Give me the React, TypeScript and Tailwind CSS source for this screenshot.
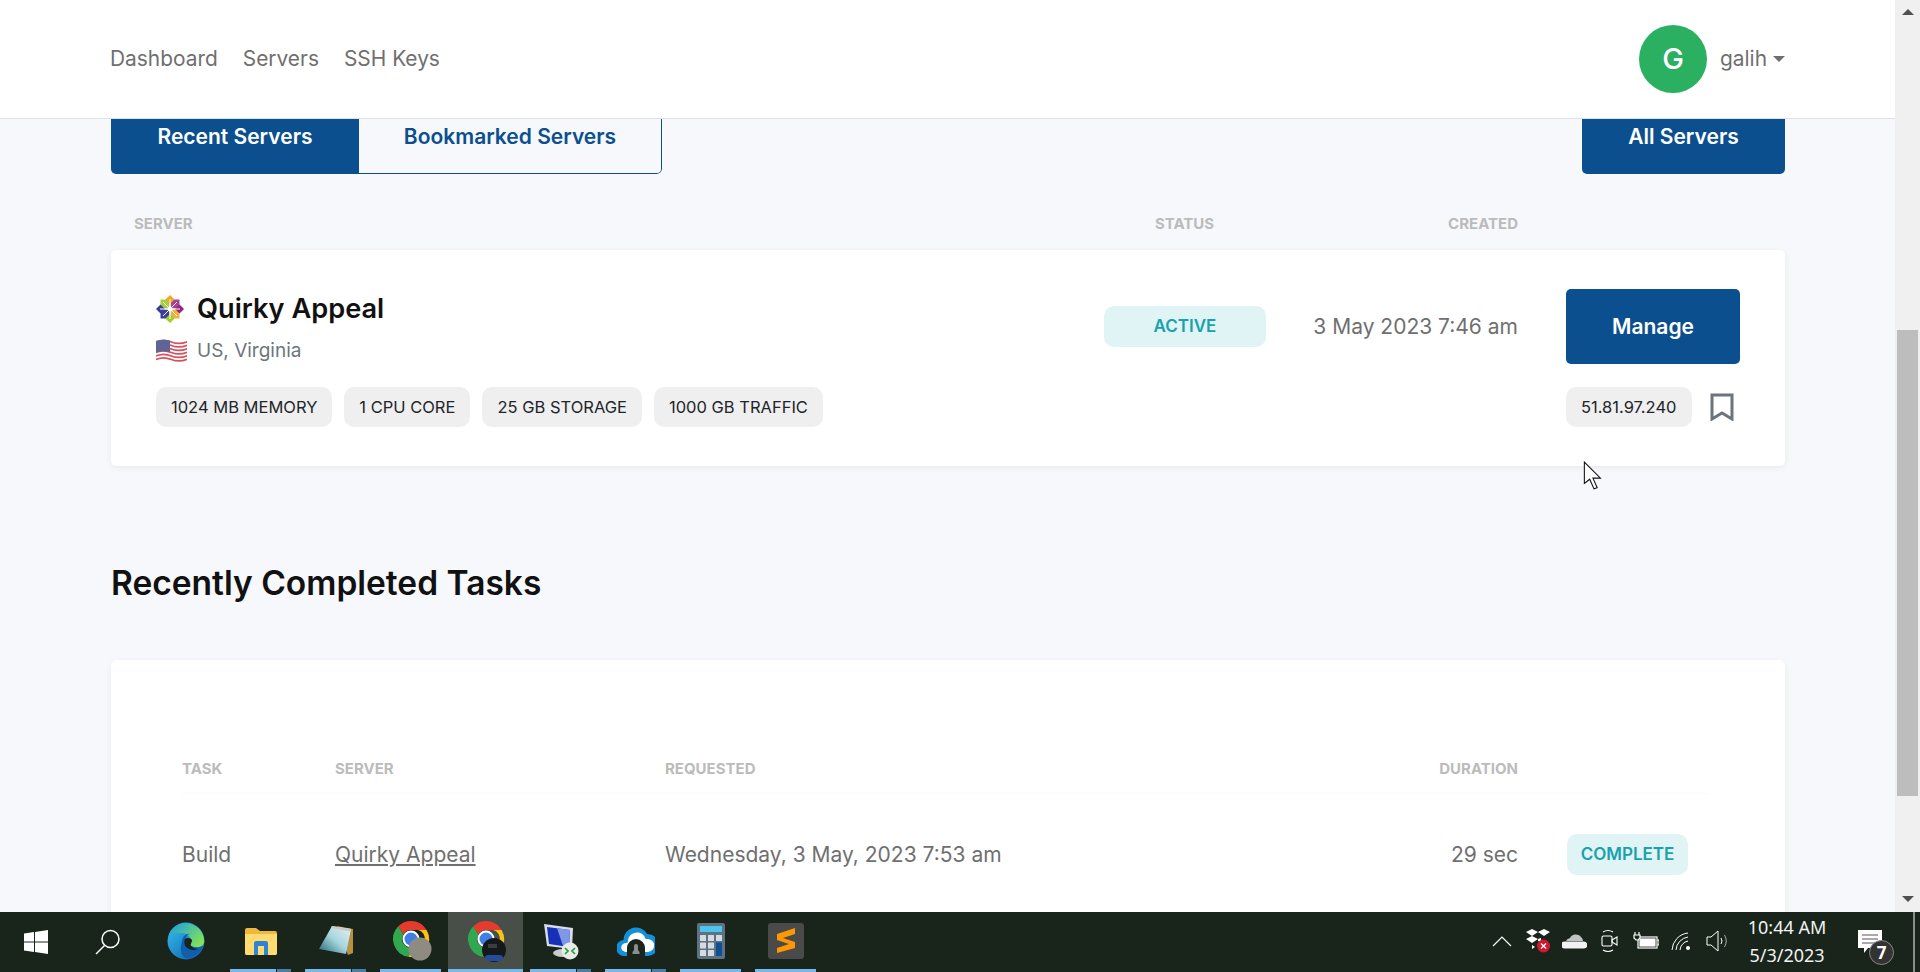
import React from 'react';

const Chip: React.FC<{ children: React.ReactNode }> = ({ children }) => (
  <span className="h-10 px-[15px] flex items-center rounded-[10px] bg-[#efefef] text-[16.5px] text-[#212529] whitespace-nowrap">
    {children}
  </span>
);

const CentosLogo = () => (
  <svg width="30" height="30" viewBox="0 0 30 30">
    <path d="M5.500 5.500h9v9h-9z" fill="#a3d13a" />
    <path d="M15.500 5.500h9v9h-9z" fill="#a83f96" />
    <path d="M15.500 15.500h9v9h-9z" fill="#f2b03c" />
    <path d="M5.500 15.500h9v9h-9z" fill="#3c3c9c" />
    <path d="M15 1l4.500 4.500L15 10l-4.500-4.500z" fill="#efa724" />
    <path d="M29 15l-4.500 4.500L20 15l4.500-4.500z" fill="#932279" />
    <path d="M15 29l-4.500-4.500L15 20l4.500 4.500z" fill="#9ccd2a" />
    <path d="M1 15l4.500-4.500L10 15l-4.500 4.500z" fill="#3c3c9c" />
    <path d="M15 5v20M5 15h20M8 8l14 14M22 8L8 22" stroke="#fff" strokeWidth="1" />
    <circle cx="15" cy="15" r="2.500" fill="#fff" />
  </svg>
);

const UsFlag = () => (
  <svg width="31" height="24" viewBox="0 0 31 24">
    <path d="M0 2q8-3 15 0t16 0v20q-8 3-16 0t-15 0z" fill="#fff" />
    {[0, 3.500, 7, 10.500, 14, 17.500].map((y) => (
      <path key={y} transform={`translate(0 ${y})`} d="M0 2q8-3 15 0t16 0v1.800q-8 3-16 0t-15 0z" fill="#d4525f" />
    ))}
    <path d="M0 2q7-2.500 14-.4v11.400q-7-1.600-14 .4z" fill="#5f6497" />
  </svg>
);

const Edge = () => (
  <svg width="38" height="38" viewBox="0 0 38 38">
    <defs>
      <linearGradient id="eg1" x1="0" y1="0" x2="1" y2="1">
        <stop offset="0" stopColor="#35c1f1" />
        <stop offset="1" stopColor="#0c59a4" />
      </linearGradient>
      <linearGradient id="eg2" x1="0" y1="0" x2="1" y2="0.6">
        <stop offset="0" stopColor="#1b9de2" />
        <stop offset="1" stopColor="#7fe05c" />
      </linearGradient>
    </defs>
    <circle cx="19" cy="19" r="18.500" fill="url(#eg1)" />
    <path d="M3 11C8 2 21-2 30 5c5 4 8 10 7 16-1 4-6 5-11 4-4-1-5-3-3-6 1-4-2-8-8-8-5 0-9 1-12 0z" fill="url(#eg2)" />
    <path d="M15 20c0-5 4-9 8-8-5 0-5 7 0 11 4 3 9 3 13 1-3 8-11 13-18 12-5-4-5-10-3-16z" fill="#0f5fae" />
    <path d="M18 17c3-2 6-1 7 1 0 3-2 4-1 6 1 2 4 3 7 3-4 2-9 1-12-2-2-2-2-6-1-8z" fill="#1a241c" />
  </svg>
);

const Folder = () => (
  <svg width="32" height="28" viewBox="0 0 32 28">
    <path d="M0 3a2 2 0 012-2h9l4 3h15a2 2 0 012 2v20a2 2 0 01-2 2H2a2 2 0 01-2-2z" fill="#f0b73e" />
    <path d="M0 7h32v19a2 2 0 01-2 2H2a2 2 0 01-2-2z" fill="#ffdb70" />
    <path d="M9 16a2 2 0 012-2h10a2 2 0 012 2v12h-4v-9h-6v9H9z" fill="#2f83d6" />
  </svg>
);

const Notepad = () => (
  <svg width="34" height="32" viewBox="0 0 34 32">
    <defs>
      <linearGradient id="npg" x1="0" y1="1" x2="1" y2="0">
        <stop offset="0" stopColor="#1f6272" />
        <stop offset="0.5" stopColor="#a6d6de" />
        <stop offset="1" stopColor="#e8f2f3" />
      </linearGradient>
    </defs>
    <path d="M18 1l16 3v24l-5 2z" fill="#b7913f" />
    <path d="M13 1l19 3-5 25L0 24z" fill="url(#npg)" />
    <path d="M13 1l19 3-.5 2.500L12 3z" fill="#c9c9c9" />
  </svg>
);

const Chrome: React.FC<{ badge: 'stone' | 'dark' }> = ({ badge }) => (
  <svg width="44" height="42" viewBox="-4 0 44 42">
    <path d="M18 1a18 18 0 0115.600 9H18a8.500 8.500 0 00-7.600 4.700L5.300 6.300A18 18 0 0118 1z" fill="#e33b2e" />
    <path d="M5.300 6.300A18 18 0 0015.500 36.800l5.600-9.800a8.500 8.500 0 01-10.700-12.300z" fill="#2fa84f" />
    <path d="M33.600 10A18 18 0 0115.500 36.800l5.600-9.800A8.500 8.500 0 0025 10z" fill="#fbc116" />
    <circle cx="18" cy="19" r="8.500" fill="#fff" />
    <circle cx="18" cy="19" r="6.500" fill="#3f7fe8" />
    {badge === 'stone' ? (
      <circle cx="27" cy="29" r="11.500" fill="#8f8b82" />
    ) : (
      <>
        <circle cx="26" cy="30" r="12" fill="#16191c" />
        <rect x="17" y="35" width="18" height="6" rx="3" fill="#284c9c" />
        <rect x="20" y="24" width="9" height="4" fill="#3a3e42" />
      </>
    )}
  </svg>
);

const Rdp = () => (
  <svg width="36" height="38" viewBox="0 0 36 38">
    <path d="M1 2l29 4-1 21L4 24z" fill="#d9dde8" />
    <path d="M4 5l23 3-1 17L6 22z" fill="#1730b8" />
    <path d="M14 6l13 2-1 17-6-1z" fill="#7f97e6" />
    <ellipse cx="20" cy="31" rx="10" ry="4" fill="#c9ccd0" />
    <circle cx="27" cy="29" r="8.500" fill="#e8ece8" />
    <path d="M22 26l3 3-3 3M32 26l-3 3 3 3" stroke="#2a9a3c" strokeWidth="1.700" fill="none" />
  </svg>
);

const CloudHome = () => (
  <svg width="38" height="30" viewBox="0 0 38 30">
    <path d="M8 30a8 8 0 01-1.500-16A12.500 12.500 0 0130 8a11 11 0 011 22z" fill="#1390d8" />
    <path d="M9 26a4.500 4.500 0 01-.5-9l2-.3.500-2.200A9 9 0 0128 11.500l.6 1.500h1.600a6.500 6.500 0 01.8 13z" fill="#fff" />
    <path d="M10 30v-8a9 9 0 0118 0v8z" fill="#19241b" />
    <path d="M15.500 28v-2l1.500-2v-4a2 2 0 014 0v4l1.500 2v2z" fill="#8a8f8e" />
  </svg>
);

const Calculator = () => (
  <svg width="28" height="36" viewBox="0 0 28 36">
    <rect width="28" height="36" rx="2" fill="#5f7282" />
    <rect x="3" y="3" width="22" height="6" fill="#4bc6ea" />
    {[0, 1, 2].flatMap((r) =>
      [0, 1, 2].map((c) =>
        c === 2 && r > 0 ? null : (
          <rect key={`${r}-${c}`} x={3 + c * 8} y={12 + r * 7.500} width="6" height="6" rx="0.500" fill="#d5dbe0" />
        ),
      ),
    )}
    <rect x="19" y="19.500" width="6" height="13.500" fill="#0f4f96" />
  </svg>
);

const Sublime = () => (
  <svg width="36" height="36" viewBox="0 0 36 36">
    <rect width="36" height="36" rx="3" fill="#4a4a4a" />
    <path d="M9 14l18-6v6L15 18l12 4v6L9 33v-5l12-4-12-4z" fill="#ff9800" transform="translate(0 -3)" />
  </svg>
);

const WinLogo = () => (
  <svg width="24" height="24" viewBox="0 0 24 24" fill="#fff">
    <path d="M0 3.400l10-1.400v9.500H0zM11 1.900L24 0v11.500H11zM0 12.500h10V22L0 20.600zM11 12.500h13V24l-13-1.900z" />
  </svg>
);

const TaskItem: React.FC<{ active?: boolean; split?: boolean; line?: boolean; children: React.ReactNode }> = ({
  active,
  split,
  line = true,
  children,
}) => (
  <div className={`relative w-[75px] h-full flex items-center justify-center pb-[2px] ${active ? 'bg-[#484e48]' : ''}`}>
    {children}
    {line && (
      <div className={`absolute bottom-0 h-[3px] flex ${active ? 'left-0 right-0' : 'left-[7px] right-[7px]'}`}>
        <div className="flex-1 bg-[#76b9ed]" />
        {split && <div className="w-[14px] ml-px bg-[#4a7ea6]" />}
      </div>
    )}
  </div>
);

const TrayIcon: React.FC<{ children: React.ReactNode }> = ({ children }) => (
  <div className="w-9 h-full flex items-center justify-center">{children}</div>
);

const Taskbar = () => (
  <div className="h-[60px] shrink-0 flex items-stretch bg-[#19241b] text-white">
    <div className="w-[72px] flex items-center justify-center"><WinLogo /></div>
    <div className="w-[72px] mr-[4px] flex items-center justify-center">
      <svg width="26" height="26" viewBox="0 0 26 26" fill="none" stroke="#fff" strokeWidth="1.500">
        <circle cx="15.500" cy="10" r="8.500" />
        <path d="M9.500 16.500L1 25" />
      </svg>
    </div>
    <TaskItem line={false}><Edge /></TaskItem>
    <TaskItem split><Folder /></TaskItem>
    <TaskItem split><Notepad /></TaskItem>
    <TaskItem><Chrome badge="stone" /></TaskItem>
    <TaskItem active><Chrome badge="dark" /></TaskItem>
    <TaskItem split><Rdp /></TaskItem>
    <TaskItem split><CloudHome /></TaskItem>
    <TaskItem><Calculator /></TaskItem>
    <TaskItem><Sublime /></TaskItem>

    <div className="flex-1" />

    <div className="flex items-stretch pb-[2px]">
      <TrayIcon>
        <svg width="20" height="12" viewBox="0 0 20 12" fill="none" stroke="#fff" strokeWidth="1.200"><path d="M1 11l9-9 9 9" /></svg>
      </TrayIcon>
      <TrayIcon>
        <svg width="26" height="24" viewBox="0 0 26 24">
          <path d="M1 3l6-3 6 3 6-3 6 3-6 4-6-4-6 4zM1 10l6-3 6 3-6 4zM13 10l3-1v4l-3-1zM7 16l3 2-3 2z" fill="#fff" />
          <circle cx="18.500" cy="17" r="6.500" fill="#d4162f" />
          <path d="M16 14.500l5 5M21 14.500l-5 5" stroke="#fff" strokeWidth="1.400" />
        </svg>
      </TrayIcon>
      <TrayIcon>
        <svg width="25" height="16" viewBox="0 0 25 16">
          <path d="M4 8a5 5 0 014-3 6.500 6.500 0 0111-1 5 5 0 012 4z" fill="#c2c2c2" />
          <path d="M3 15.500a3.500 3.500 0 01-.5-7h19a3.500 3.500 0 01.5 7z" fill="#f2f2f2" />
        </svg>
      </TrayIcon>
      <TrayIcon>
        <svg width="18" height="24" viewBox="0 0 18 24" fill="none" stroke="#fff" strokeWidth="1.100">
          <rect x="1" y="7" width="10" height="10" rx="1.500" />
          <path d="M11 11l5-3v8l-5-3z" />
          <path d="M2 3q5-3 10 0M2 21q5 3 10 0" />
        </svg>
      </TrayIcon>
      <TrayIcon>
        <svg width="26" height="20" viewBox="0 0 26 20" fill="none" stroke="#fff" strokeWidth="1.200">
          <rect x="5" y="6" width="19" height="11" />
          <rect x="7" y="8" width="15" height="7" fill="#fff" />
          <path d="M24 9h2v5h-2" />
          <path d="M2 1v3M6 1v3M1 4h6v3l-2 2H3L1 7z" fill="#19241b" />
        </svg>
      </TrayIcon>
      <TrayIcon>
        <svg width="22" height="20" viewBox="0 0 22 20" fill="none" stroke="#fff" strokeWidth="1">
          <path d="M1 19A18 18 0 0117 2" />
          <path d="M5 19A14 14 0 0117 6" />
          <path d="M9 19a10 10 0 018-9" />
          <circle cx="17" cy="17" r="2" fill="#fff" stroke="none" />
        </svg>
      </TrayIcon>
      <TrayIcon>
        <svg width="24" height="22" viewBox="0 0 24 22" fill="none" stroke="#fff" strokeWidth="1">
          <path d="M1 7h4l7-6v20l-7-6H1z" />
          <path d="M15 8q2 3 0 6" />
          <path d="M18.500 5q3.500 6 0 12" stroke="#aaa" />
        </svg>
      </TrayIcon>
      <div className="w-[108px] -ml-[3px] flex flex-col items-center justify-center text-[18px] leading-[28px] font-['Noto_Sans',sans-serif] text-[#f2f2f2]">
        <span>10:44 AM</span>
        <span>5/3/2023</span>
      </div>
      <div className="relative w-[72px]">
        <svg width="24" height="24" viewBox="0 0 24 24" className="absolute left-[17px] top-[18px]">
          <path d="M0 0h24v18H10l-4 5v-5H0z" fill="#fff" />
          <path d="M4 5h16M4 9h16M4 13h16" stroke="#555" strokeWidth="1" />
        </svg>
        <span className="absolute left-[28px] top-[28px] w-[25px] h-[25px] rounded-full bg-[#333] border border-[#888] flex items-center justify-center text-[17px] font-bold font-['Noto_Sans',sans-serif]">
          7
        </span>
      </div>
    </div>
    <div className="w-[7px] relative">
      <div className="absolute left-0 top-0 bottom-0 w-[2px] bg-[#8a8e8a]" />
    </div>
  </div>
);

const Scrollbar = () => (
  <div className="relative w-[25px] shrink-0 bg-[#f0f0f0]">
    <div className="absolute left-[7px] top-[9px] w-0 h-0 border-x-[6px] border-x-transparent border-b-[6px] border-b-[#505050]" />
    <div className="absolute left-[2px] right-[2px] top-[330px] h-[466px] bg-[#bdbdbd]" />
    <div className="absolute left-[7px] top-[896px] w-0 h-0 border-x-[6px] border-x-transparent border-t-[6px] border-t-[#505050]" />
  </div>
);

const Header = () => (
  <header className="relative z-10 h-[119px] shrink-0 bg-white border-b border-[#dee2e6] flex items-center justify-between pl-[110px] pr-[110px] pb-px">
    <nav className="flex gap-[25px] text-[20.9px] text-[#6f6f6f]">
      <a>Dashboard</a>
      <a>Servers</a>
      <a>SSH Keys</a>
    </nav>
    <div className="flex items-center">
      <div className="w-[68px] h-[68px] rounded-full bg-[#2bb061] flex items-center justify-center text-white text-[29px] font-medium">G</div>
      <span className="ml-[13px] text-[20.9px] text-[#6f6f6f]">galih</span>
      <span className="ml-[6px] mt-[1px] w-0 h-0 border-x-[6px] border-x-transparent border-t-[6px] border-t-[#6f6f6f]" />
    </div>
  </header>
);

export default function App() {
  return (
    <div className="w-[1920px] h-[972px] flex flex-col overflow-hidden font-[Inter,sans-serif]">
      <div className="flex-1 min-h-0 flex">
        <div className="relative flex-1 min-w-0 flex flex-col overflow-hidden bg-[#f6f8fc]">
          <Header />
          <main className="px-[111px] pr-[110px] -mt-[20px]">
            <div className="flex justify-between">
              <div className="flex h-[75px] text-[21px] font-semibold rounded-[5px] overflow-hidden">
                <button className="w-[248px] pt-px bg-[#0b4f8f] text-white">Recent Servers</button>
                <button className="w-[303px] pt-px border border-l-0 border-[#0b4f8f] rounded-r-[5px] text-[#0b4f8f]">Bookmarked Servers</button>
              </div>
              <button className="w-[203px] h-[75px] pt-px rounded-[5px] bg-[#0b4f8f] text-white text-[21px] font-semibold">All Servers</button>
            </div>

            <div className="mt-[37px] mb-[13px] h-[26px] flex items-center pl-[23px] pr-[267px] text-[15px] font-bold text-[#bbbbbb]">
              <div className="flex-1">SERVER</div>
              <div className="w-[161px] text-center">STATUS</div>
              <div className="w-[253px] text-right">CREATED</div>
            </div>

            <div className="rounded-[5px] bg-white shadow-[0_2px_6px_rgba(0,0,0,0.06)] px-[45px] pt-[39px] pb-[39px]">
              <div className="flex items-center h-[75px]">
                <div className="flex-1 pt-[6px]">
                  <div className="flex items-center gap-[12px] h-[32px] -ml-[1px]">
                    <CentosLogo />
                    <span className="text-[27.2px] font-semibold text-[#111111]">Quirky Appeal</span>
                  </div>
                  <div className="flex items-center gap-[10px] mt-[11px] h-[30px]">
                    <UsFlag />
                    <span className="text-[19px] text-[#6c757d]">US, Virginia</span>
                  </div>
                </div>
                <div className="w-[162px] h-[41px] rounded-[10px] bg-[#e0f3f5] flex items-center justify-center text-[17px] font-semibold text-[#17a2ad]">ACTIVE</div>
                <div className="w-[252px] text-right text-[21px] text-[#6f6f6f]">3 May 2023 7:46 am</div>
                <button className="ml-[48px] w-[174px] h-[75px] rounded-[5px] bg-[#0b4f8f] text-white text-[21px] font-semibold">Manage</button>
              </div>
              <div className="mt-[23px] flex items-center">
                <div className="flex-1 flex gap-[12px]">
                  <Chip>1024 MB MEMORY</Chip>
                  <Chip>1 CPU CORE</Chip>
                  <Chip>25 GB STORAGE</Chip>
                  <Chip>1000 GB TRAFFIC</Chip>
                </div>
                <div className="w-[174px] flex items-center">
                  <Chip>51.81.97.240</Chip>
                  <svg width="24" height="28" viewBox="0 0 24 28" fill="none" stroke="#6c757d" strokeWidth="3" className="ml-[18px]">
                    <path d="M2 2h20v24l-10-6-10 6z" />
                  </svg>
                </div>
              </div>
            </div>

            <h2 className="mt-[97px] h-[40px] leading-[40px] text-[33.5px] font-semibold text-[#111111]">Recently Completed Tasks</h2>

            <div className="mt-[57px] rounded-[5px] bg-white shadow-[0_2px_6px_rgba(0,0,0,0.06)] pl-[71px] pr-[77px] pt-[96px] h-[300px]">
              <div className="grid grid-cols-[153px_330px_853px_190px] h-[38px] border-b border-[#fafafa] text-[15px] font-bold text-[#bbbbbb] leading-[26px]">
                <div>TASK</div>
                <div>SERVER</div>
                <div>REQUESTED</div>
                <div className="w-0 -ml-[100px] min-w-[100px] text-right">DURATION</div>
              </div>
              <div className="grid grid-cols-[153px_330px_853px_190px] h-[120px] items-center text-[21px] text-[#6f6f6f]">
                <div className="pt-[2px]">Build</div>
                <div className="pt-[2px]"><a className="underline">Quirky Appeal</a></div>
                <div className="relative pt-[2px]">
                  Wednesday, 3 May, 2023 7:53 am
                  <span className="absolute right-0 top-[2px]">29 sec</span>
                </div>
                <div className="pl-[49px]">
                  <span className="inline-flex w-[121px] h-[41px] pt-[2px] rounded-[10px] bg-[#e0f3f5] items-center justify-center text-[17px] font-semibold text-[#17a2ad]">COMPLETE</span>
                </div>
              </div>
            </div>
          </main>

          {/* mouse pointer */}
          <svg width="22" height="30" viewBox="0 0 20 28" className="absolute left-[1583px] top-[461px]">
            <path d="M1 1v20l5-4 4 9 3-1-4-9h7z" fill="#fff" stroke="#111" strokeWidth="1" />
          </svg>
        </div>
        <Scrollbar />
      </div>
      <Taskbar />
    </div>
  );
}
